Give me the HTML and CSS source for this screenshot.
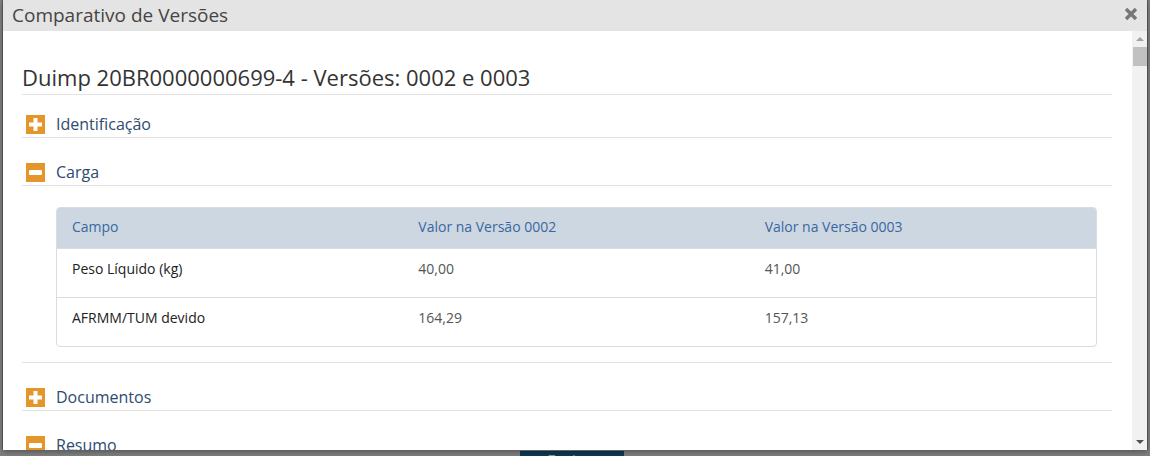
FILE: index.html
```html
<!DOCTYPE html>
<html lang="pt-BR">
<head>
<meta charset="utf-8">
<title>Comparativo de Versões</title>
<link rel="stylesheet" href="styles.css">
</head>
<body>
<div class="page">
  <div class="page-footer">
    <button class="btn-fechar" type="button">Fechar</button>
  </div>
</div>

<div class="modal">
  <div class="modal-title">
    <span class="modal-title-text">Comparativo de Versões</span>
    <svg class="modal-close" width="14" height="14" viewBox="0 0 14 14" aria-hidden="true">
      <path d="M2 2 L12 12 M12 2 L2 12" stroke="#777" stroke-width="3.4" stroke-linecap="butt" fill="none"/>
    </svg>
  </div>
  <div class="modal-body">
    <div class="content">
      <h1 class="heading">Duimp 20BR0000000699-4 - Versões: 0002 e 0003</h1>

      <div class="section">
        <div class="section-header is-first">
          <svg class="toggle" width="19" height="19" viewBox="0 0 19 19" aria-hidden="true">
            <rect x="0" y="0" width="19" height="19" fill="#e4962b"/>
            <rect x="3" y="7.5" width="13" height="4" fill="#fff"/>
            <rect x="7.5" y="3" width="4" height="13" fill="#fff"/>
          </svg>
          <span class="section-title">Identificação</span>
        </div>
      </div>

      <div class="section">
        <div class="section-header">
          <svg class="toggle" width="19" height="19" viewBox="0 0 19 19" aria-hidden="true">
            <rect x="0" y="0" width="19" height="19" fill="#e4962b"/>
            <rect x="3" y="7" width="13" height="5" rx="1" fill="#fff"/>
          </svg>
          <span class="section-title">Carga</span>
        </div>
        <div class="section-body">
          <div class="table">
            <div class="row head">
              <div class="cell">Campo</div>
              <div class="cell">Valor na Versão 0002</div>
              <div class="cell">Valor na Versão 0003</div>
            </div>
            <div class="row">
              <div class="cell field">Peso Líquido (kg)</div>
              <div class="cell">40,00</div>
              <div class="cell">41,00</div>
            </div>
            <div class="row">
              <div class="cell field">AFRMM/TUM devido</div>
              <div class="cell">164,29</div>
              <div class="cell">157,13</div>
            </div>
          </div>
        </div>
      </div>

      <div class="section">
        <div class="section-header">
          <svg class="toggle" width="19" height="19" viewBox="0 0 19 19" aria-hidden="true">
            <rect x="0" y="0" width="19" height="19" fill="#e4962b"/>
            <rect x="3" y="7.5" width="13" height="4" fill="#fff"/>
            <rect x="7.5" y="3" width="4" height="13" fill="#fff"/>
          </svg>
          <span class="section-title">Documentos</span>
        </div>
      </div>

      <div class="section">
        <div class="section-header">
          <svg class="toggle" width="19" height="19" viewBox="0 0 19 19" aria-hidden="true">
            <rect x="0" y="0" width="19" height="19" fill="#e4962b"/>
            <rect x="3" y="7" width="13" height="5" rx="1" fill="#fff"/>
          </svg>
          <span class="section-title">Resumo</span>
        </div>
      </div>
    </div>

    <div class="scrollbar" aria-hidden="true">
      <div class="sb-button"><span class="sb-arrow up"></span></div>
      <div class="sb-track"><div class="sb-thumb"></div></div>
      <div class="sb-button"><span class="sb-arrow down"></span></div>
    </div>
  </div>
</div>
</body>
</html>
```

FILE: styles.css
```css
* {
  box-sizing: border-box;
}

html,
body {
  margin: 0;
  height: 100%;
}

body {
  position: relative;
  overflow: hidden;
  background: #808080;
  font-family: "Open Sans", "Liberation Sans", sans-serif;
}

/* page behind the overlay */
.page {
  height: 100%;
  overflow: hidden;
}

.page-footer {
  display: flex;
  justify-content: center;
  padding-top: 451px;
  padding-right: 6px;
}

.btn-fechar {
  width: 104px;
  height: 5px;
  padding: 0;
  border: 0;
  overflow: hidden;
  background: #0c3a54;
  color: #8a9aa6;
  font-family: inherit;
  font-size: 16px;
  line-height: 20px;
  display: flex;
  justify-content: center;
  align-items: flex-start;
}

/* modal */
.modal {
  position: absolute;
  left: 3px;
  top: 0;
  width: 1144px;
  height: 450px;
  background: #fff;
  display: flex;
  flex-direction: column;
  box-shadow: 0 2px 6px rgba(0, 0, 0, 0.35), -1px 0 0 #5f5f5f, 1px 0 0 #5f5f5f;
}

.modal-title {
  flex: 0 0 31px;
  height: 31px;
  background: #e4e4e4;
  display: flex;
  align-items: center;
  justify-content: space-between;
  padding: 0 9px 1px 9px;
}

.modal-title-text {
  font-size: 19px;
  line-height: 30px;
  color: #454545;
}

.modal-close {
  display: block;
  margin-bottom: 2px;
}

.modal-body {
  flex: 1;
  min-height: 0;
  display: flex;
}

.content {
  flex: 1;
  min-width: 0;
  overflow: hidden;
  padding: 31px 20px 0 19px;
}

.heading {
  margin: 0;
  padding: 0 0 2px 0;
  font-size: 22px;
  line-height: 30px;
  font-weight: normal;
  color: #333;
  border-bottom: 1px solid #e2e2e2;
}

.section-header {
  display: flex;
  align-items: center;
  gap: 11px;
  padding: 23px 0 2px 4px;
  border-bottom: 1px solid #e2e2e2;
}

.section-header.is-first {
  padding-top: 18px;
}

.toggle {
  display: block;
  flex: 0 0 19px;
}

.section-title {
  font-size: 16px;
  line-height: 22px;
  color: #2e4b6f;
}

.section-body {
  padding: 21px 15px 15px 34px;
  border-bottom: 1px solid #e2e2e2;
}

.table {
  border: 1px solid #dcdcdc;
  border-radius: 4px;
  overflow: hidden;
}

.row {
  display: grid;
  grid-template-columns: 1fr 1fr 1fr;
  border-top: 1px solid #dcdcdc;
}

.row.head {
  border-top: 0;
  background: #cdd7e2;
}

.cell {
  font-size: 14px;
  line-height: 19px;
  color: #555;
  padding: 10px 15px 19px 15px;
}

.row.head .cell {
  color: #3a679f;
  padding: 9px 15px 12px 15px;
}

.cell.field {
  color: #222;
}

/* drawn scrollbar */
.scrollbar {
  flex: 0 0 15px;
  width: 15px;
  background: #f1f1f1;
  display: flex;
  flex-direction: column;
}

.sb-button {
  flex: 0 0 16px;
  display: flex;
  align-items: center;
  justify-content: center;
}

.sb-arrow {
  width: 0;
  height: 0;
  border-left: 4px solid transparent;
  border-right: 4px solid transparent;
}

.sb-arrow.up {
  border-bottom: 4px solid #a3a3a3;
}

.sb-arrow.down {
  border-top: 4px solid #505050;
}

.sb-track {
  flex: 1;
  padding-left: 1px;
}

.sb-thumb {
  height: 19px;
  background: #c1c1c1;
}
```
